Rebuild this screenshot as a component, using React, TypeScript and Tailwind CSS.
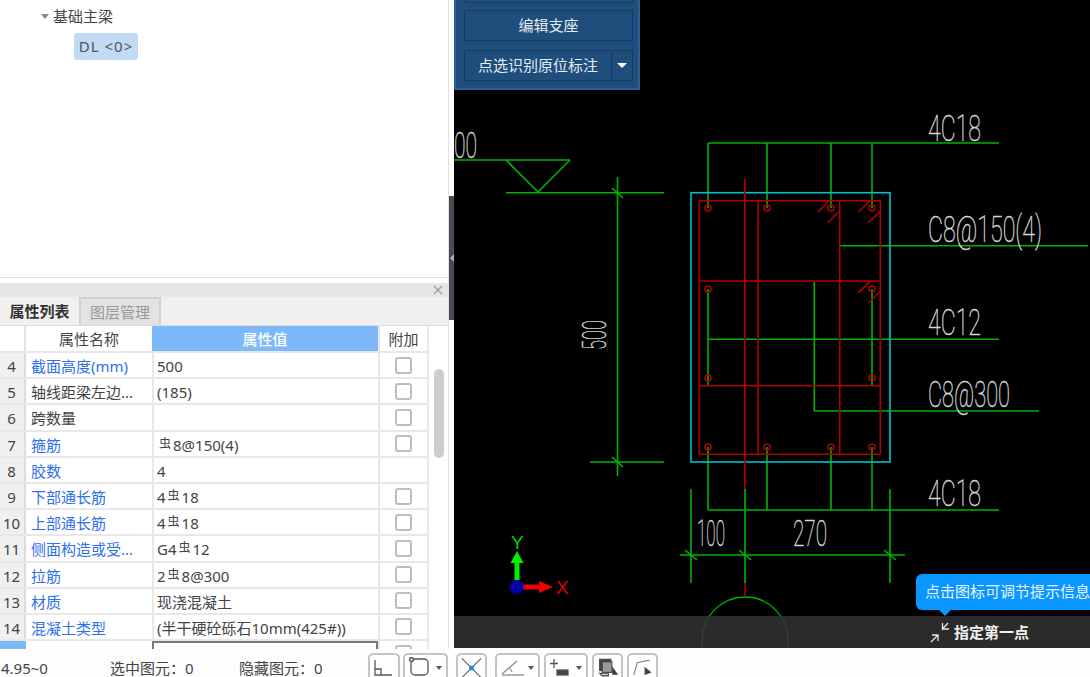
import { type ReactNode } from "react";

const FONT = "font-['Noto_Sans','Noto_Sans_CJK_SC',sans-serif]";

type Row = {
  no: number;
  name: string;
  blue?: boolean;
  value?: ReactNode;
  check?: boolean;
};

function Bar({ children }: { children: string }) {
  return <span className="relative -top-[3px] mx-[2px] text-[12px] leading-none">{children}</span>;
}

const rows: Row[] = [
  { no: 4, name: "截面高度(mm)", blue: true, value: "500", check: true },
  { no: 5, name: "轴线距梁左边...", value: "(185)", check: true },
  { no: 6, name: "跨数量", check: true },
  { no: 7, name: "箍筋", blue: true, value: <><Bar>虫</Bar>8@150(4)</>, check: true },
  { no: 8, name: "胶数", blue: true, value: "4" },
  { no: 9, name: "下部通长筋", blue: true, value: <>4<Bar>虫</Bar>18</>, check: true },
  { no: 10, name: "上部通长筋", blue: true, value: <>4<Bar>虫</Bar>18</>, check: true },
  { no: 11, name: "侧面构造或受...", blue: true, value: <>G4<Bar>虫</Bar>12</>, check: true },
  { no: 12, name: "拉筋", blue: true, value: <>2<Bar>虫</Bar>8@300</>, check: true },
  { no: 13, name: "材质", blue: true, value: "现浇混凝土", check: true },
  { no: 14, name: "混凝土类型", blue: true, value: "(半干硬砼砾石10mm(425#))", check: true },
];

function PropRow({ row }: { row: Row }) {
  return (
    <div className="flex h-[26.2px] shrink-0 border-b-2 border-[#e8e8e8] text-[15px] leading-[26px]">
      <div className="w-[26px] shrink-0 border-r-2 border-[#dcdcdc] bg-[#f0f0f0] pr-[1px] text-center text-[#444]">{row.no}</div>
      <div className={`w-[126px] shrink-0 whitespace-nowrap pl-[5px] ${row.blue ? "text-[#2f6fee]" : "text-[#444]"}`}>{row.name}</div>
      <div className="w-[226px] shrink-0 whitespace-nowrap border-l-2 border-[#e8e8e8] pl-[3px] text-[#444]">{row.value}</div>
      <div className="flex w-[51px] shrink-0 items-center justify-center border-x-2 border-[#e8e8e8]">
        {row.check ? <div className="h-[17px] w-[17px] rounded-[3px] border-2 border-[#bdbdbd] bg-white" /> : null}
      </div>
    </div>
  );
}

function ToolBtn({ w, children, caret }: { w: string; children: ReactNode; caret?: boolean }) {
  return (
    <div className={`flex h-[24px] ${w} shrink-0 items-start justify-between overflow-hidden rounded-t-[5px] border-2 border-b-0 border-[#c4c4c4] bg-white px-[3px] pt-[2px]`}>
      {children}
      {caret ? <span className="mt-[9px] mr-[1px] h-0 w-0 border-x-[3px] border-t-[4px] border-x-transparent border-t-[#555]" /> : null}
    </div>
  );
}

const green = "#00b400";
const red = "#b00000";

const greenLines = [
  [454, 160, 570, 160], [506, 160, 538, 192], [538, 192, 570, 160],
  [506, 192.7, 664, 192.7], [590, 462, 664, 462], [617.5, 177, 617.5, 476],
  [612, 188, 623, 198], [612, 457, 623, 467],
  [708, 143, 999, 143], [708, 143, 708, 208], [767, 143, 767, 208], [831, 143, 831, 208], [872, 143, 872, 208],
  [840, 245.7, 1088, 245.7], [708, 339.3, 999, 339.3], [814.3, 281.7, 814.3, 411], [814.3, 411, 1039, 411],
  [708, 289, 708, 385], [872, 289, 872, 385],
  [708, 447, 708, 510], [767, 447, 767, 510], [831, 447, 831, 510], [872, 447, 872, 510], [708, 510, 999, 510],
  [691, 489, 691, 583], [745, 489, 745, 583], [890, 489, 890, 583],
  [680, 555, 905, 555], [685, 550, 697, 560], [739, 550, 751, 560], [884, 550, 896, 560],
];

const redLines = [
  [699.3, 200.7, 880.3, 200.7], [699.3, 200.7, 699.3, 454.3], [880.3, 200.7, 880.3, 454.3], [699.3, 454.3, 880.3, 454.3],
  [699.3, 281, 880.3, 281], [699.3, 385.7, 880.3, 385.7],
  [758, 200.7, 758, 454.3], [839.7, 200.7, 839.7, 454.3], [744.7, 179, 744.7, 489], [745, 583, 745, 597],
  [817.7, 212.3, 829, 200.7], [827.7, 222.7, 839, 211.7], [858.3, 212.3, 870, 200.7], [868.3, 222.7, 880, 211.7],
  [858.3, 292.7, 870, 281.7], [868.3, 303.3, 880, 291.7],
];

const bars = [
  [708, 208], [767, 208], [831, 208], [872, 208], [708, 289], [872, 289],
  [708, 378], [872, 378], [708, 447], [767, 447], [831, 447], [872, 447],
];

const labels = [
  { t: "4C18", x: 928, y: 141, w: 53 },
  { t: "C8@150(4)", x: 928, y: 242, w: 114 },
  { t: "4C12", x: 928, y: 335, w: 53 },
  { t: "C8@300", x: 928, y: 407, w: 82 },
  { t: "4C18", x: 928, y: 506, w: 53 },
  { t: "00", x: 454, y: 158, w: 23 },
  { t: "100", x: 697, y: 546, w: 28 },
  { t: "270", x: 793, y: 546, w: 34 },
];

function Drawing() {
  return (
    <svg viewBox="454 0 636 648" className="absolute inset-0 h-[648px] w-[636px]" fill="none">
      <g stroke={green} strokeWidth="1.6">
        {greenLines.map((l, i) => <line key={i} x1={l[0]} y1={l[1]} x2={l[2]} y2={l[3]} />)}
        <circle cx="745" cy="640" r="43" strokeWidth="1.3" />
      </g>
      <rect x="691" y="192.7" width="199" height="269.3" stroke="#00c0d0" strokeWidth="1.6" />
      <g stroke={red} strokeWidth="1.6">
        {redLines.map((l, i) => <line key={i} x1={l[0]} y1={l[1]} x2={l[2]} y2={l[3]} />)}
        {bars.map((b, i) => <circle key={i} cx={b[0]} cy={b[1]} r="3" />)}
      </g>
      <g fill="#e0e0e0" stroke="#d0d0d0" strokeWidth="0.3" fontFamily="Roboto, sans-serif" fontWeight="100" fontSize="25">
        {labels.map((l, i) => (
          <text key={i} transform={`translate(${l.x} ${l.y}) scale(1 1.48)`} textLength={l.w} lengthAdjust="spacingAndGlyphs">{l.t}</text>
        ))}
        <text transform="translate(606 350) rotate(-90) scale(1 1.32)" textLength="30" lengthAdjust="spacingAndGlyphs">500</text>
      </g>
      {/* ucs axis */}
      <path d="M514.5 580V563H510.5L517 551L523.5 563H519.5V580Z" fill="#00f000" />
      <path d="M523 584.5H539V581L553 587L539 593V589.5H523Z" fill="#f00000" />
      <circle cx="516.7" cy="587" r="7" fill="#0000a8" />
      <text x="511" y="549" fill="#00d000" fontFamily="Liberation Sans, sans-serif" fontSize="19">Y</text>
      <text x="556" y="594" fill="#e00000" fontFamily="Liberation Sans, sans-serif" fontSize="19">X</text>
    </svg>
  );
}

export default function App() {
  return (
    <div className={`flex h-[677px] w-[1090px] flex-col overflow-hidden bg-white ${FONT}`}>
      <div className="flex h-[649px] shrink-0">
        <aside className="flex w-[449px] shrink-0 flex-col border-r border-[#e2e2e2]">
          <div className="h-[278px] shrink-0 border-b border-[#dedede] pt-[5px] text-[15px] text-[#444]">
            <div className="flex h-[22px] items-center pl-[41px]">
              <span className="mr-[4px] h-0 w-0 border-x-[4px] border-t-[5px] border-x-transparent border-t-[#888]" />
              基础主梁
            </div>
            <div className="mt-[6px] ml-[74px] flex h-[27px] w-[64px] items-center justify-center rounded-[3px] bg-[#c2dbf5] whitespace-nowrap tracking-[1px] text-[#555]">DL &lt;0&gt;</div>
          </div>
          <div className="mt-[5px] flex h-[14px] shrink-0 items-center justify-end bg-[#e6e6e6] pr-[5px] text-[#9a9a9a]">
            <svg width="10" height="10" viewBox="0 0 10 10" stroke="currentColor" strokeWidth="1.2"><path d="M1 1L9 9M9 1L1 9" /></svg>
          </div>
          <div className="flex h-[29px] shrink-0 items-stretch border-b border-[#dcdcdc] bg-[#f0f0f0] text-[15px]">
            <div className="flex w-[79px] items-center justify-center font-bold text-[#333]">属性列表</div>
            <div className="flex w-[82px] items-center justify-center border-2 border-b-0 border-[#d2d2d2] bg-[#e2e2e2] text-[#999]">图层管理</div>
          </div>
          <div className="flex min-h-0 flex-1">
            <div className="flex w-[429px] shrink-0 flex-col overflow-hidden">
              <div className="flex h-[27px] shrink-0 border-b-2 border-[#e8e8e8] text-[15px] leading-[27px]">
                <div className="w-[26px] shrink-0 border-r-2 border-[#e2e2e2]" />
                <div className="w-[126px] shrink-0 text-center text-[#444]">属性名称</div>
                <div className="w-[226px] shrink-0 bg-[#7db8f8] text-center font-medium text-white">属性值</div>
                <div className="w-[51px] shrink-0 border-x-2 border-[#e8e8e8] text-center text-[#444]">附加</div>
              </div>
              {rows.map((r) => <PropRow key={r.no} row={r} />)}
              <div className="flex h-[10px] shrink-0">
                <div className="w-[26px] shrink-0 bg-[#7db8f8]" />
                <div className="w-[126px] shrink-0" />
                <div className="w-[226px] shrink-0 border-x-2 border-t-2 border-[#7a7a7a]" />
                <div className="flex w-[51px] shrink-0 justify-center border-x-2 border-[#e8e8e8] pt-[4px]">
                  <div className="h-[17px] w-[17px] rounded-[3px] border-2 border-[#bdbdbd]" />
                </div>
              </div>
            </div>
            <div className="flex flex-1 justify-center pt-[43px]">
              <div className="h-[89px] w-[10px] rounded-[5px] bg-[#cdcdcd]" />
            </div>
          </div>
        </aside>

        <div className="flex w-[5px] shrink-0 flex-col bg-white">
          <div className="h-[196px] bg-white" />
          <div className="flex h-[124px] items-center justify-center bg-[#474c52]">
            <span className="h-0 w-0 border-y-[4px] border-r-[4px] border-y-transparent border-r-[#aab0b6]" />
          </div>
        </div>

        <main className="relative h-[648px] flex-1 overflow-hidden bg-black">
          <Drawing />

          <div className="absolute top-0 left-0 flex h-[90px] w-[186px] flex-col gap-[9px] border-2 border-t-0 border-[#2b5f96] bg-[#1f4d7c] pl-[8px] pr-[5px] text-[15px] text-[#e4ecf4]">
            <div className="-mt-[1px] h-[4px] shrink-0 rounded-b-[1px] border border-t-0 border-[#173b60]" />
            <div className="-mt-[2px] flex h-[31px] shrink-0 items-center justify-center border border-[#173b60] bg-[#1f4d7c]">编辑支座</div>
            <div className="flex h-[31px] shrink-0 border border-[#173b60]">
              <div className="flex flex-1 items-center justify-center whitespace-nowrap">点选识别原位标注</div>
              <div className="flex w-[21px] items-center justify-center border-l border-[#173b60]">
                <span className="h-0 w-0 border-x-[5px] border-t-[5px] border-x-transparent border-t-white" />
              </div>
            </div>
          </div>

          <div className="absolute right-0 bottom-0 left-0 flex h-[32px] items-center justify-end bg-[rgba(50,50,50,0.85)] pr-[61px]">
            <svg width="21" height="21" viewBox="0 0 21 21" fill="none" stroke="#e8e8e8" strokeWidth="1.3" className="mr-[3px]">
              <path d="M18 1L12.5 7V1M12.5 7H19" />
              <path d="M1 20L8 13M2 13H8V19" />
            </svg>
            <span className="text-[15px] font-bold text-[#efefef]">指定第一点</span>
          </div>

          <div className="absolute top-[574px] left-[462px] flex h-[36px] w-[190px] items-center rounded-l-[6px] bg-[#0a96ff] pb-[2px] pl-[9px] text-[15px] whitespace-nowrap text-[#eaf5ff]">
            点击图标可调节提示信息
            <span className="absolute top-[35px] left-[22px] h-0 w-0 border-x-[7px] border-t-[7px] border-x-transparent border-t-[#0a96ff]" />
          </div>
        </main>
      </div>

      <footer className="flex flex-1 items-end bg-[#fdfdfd] text-[15px] leading-[17px] text-[#444]">
        <span className="w-[110px] shrink-0 pl-[1px]">4.95~0</span>
        <span className="w-[129px] shrink-0">选中图元：0</span>
        <span className="w-[129px] shrink-0">隐藏图元：0</span>
        <div className="flex items-end">
          <ToolBtn w="w-[32px]">
            <svg width="22" height="20" viewBox="0 0 22 20" fill="none" stroke="#555" strokeWidth="1.3"><path d="M2 3V18H19M2 12H8V18" /></svg>
          </ToolBtn>
          <div className="w-[3px]" />
          <ToolBtn w="w-[45px]" caret>
            <svg width="24" height="20" viewBox="0 0 24 20" fill="none" stroke="#555" strokeWidth="1.3"><rect x="3" y="2" width="17" height="16" rx="4" /><circle cx="3.5" cy="2.5" r="2" fill="#ddd" /></svg>
          </ToolBtn>
          <div className="w-[8px]" />
          <ToolBtn w="w-[31px]">
            <svg width="24" height="22" viewBox="0 0 24 22" fill="none" stroke="#666" strokeWidth="1.3"><path d="M1 0L23 22M23 0L1 22" /><rect x="10" y="9" width="4" height="4" fill="#2a8ae0" stroke="#2a8ae0" /></svg>
          </ToolBtn>
          <div className="w-[8px]" />
          <ToolBtn w="w-[45px]" caret>
            <svg width="26" height="20" viewBox="0 0 26 20" fill="none" stroke="#999" strokeWidth="1.3"><path d="M2 17L17 4M2 18H24" strokeWidth="1.6" /><path d="M10 11L12 15" /></svg>
          </ToolBtn>
          <div className="w-[4px]" />
          <ToolBtn w="w-[44px]" caret>
            <svg width="26" height="20" viewBox="0 0 26 20" fill="none" stroke="#555" strokeWidth="1.3"><path d="M5 2V11M1 6.500H9" /><rect x="8" y="13" width="11" height="5" fill="#444" /></svg>
          </ToolBtn>
          <div className="w-[4px]" />
          <ToolBtn w="w-[31px]">
            <svg width="24" height="22" viewBox="0 0 24 22" fill="none" stroke="#444" strokeWidth="1.2"><path d="M3 17H13V20H6Z" fill="#ccc" /><rect x="3" y="1" width="13" height="13" fill="#444" /><rect x="6" y="4" width="11" height="12" fill="#999" /><path d="M18 11L23 18H18Z" fill="#333" /></svg>
          </ToolBtn>
          <div className="w-[4px]" />
          <ToolBtn w="w-[31px]">
            <svg width="24" height="22" viewBox="0 0 24 22" fill="none" stroke="#888" strokeWidth="1.3"><path d="M2 19L6 5L20 2" /><path d="M15 11L21 16L15 18Z" fill="#444" stroke="#444" /></svg>
          </ToolBtn>
        </div>
      </footer>
    </div>
  );
}
